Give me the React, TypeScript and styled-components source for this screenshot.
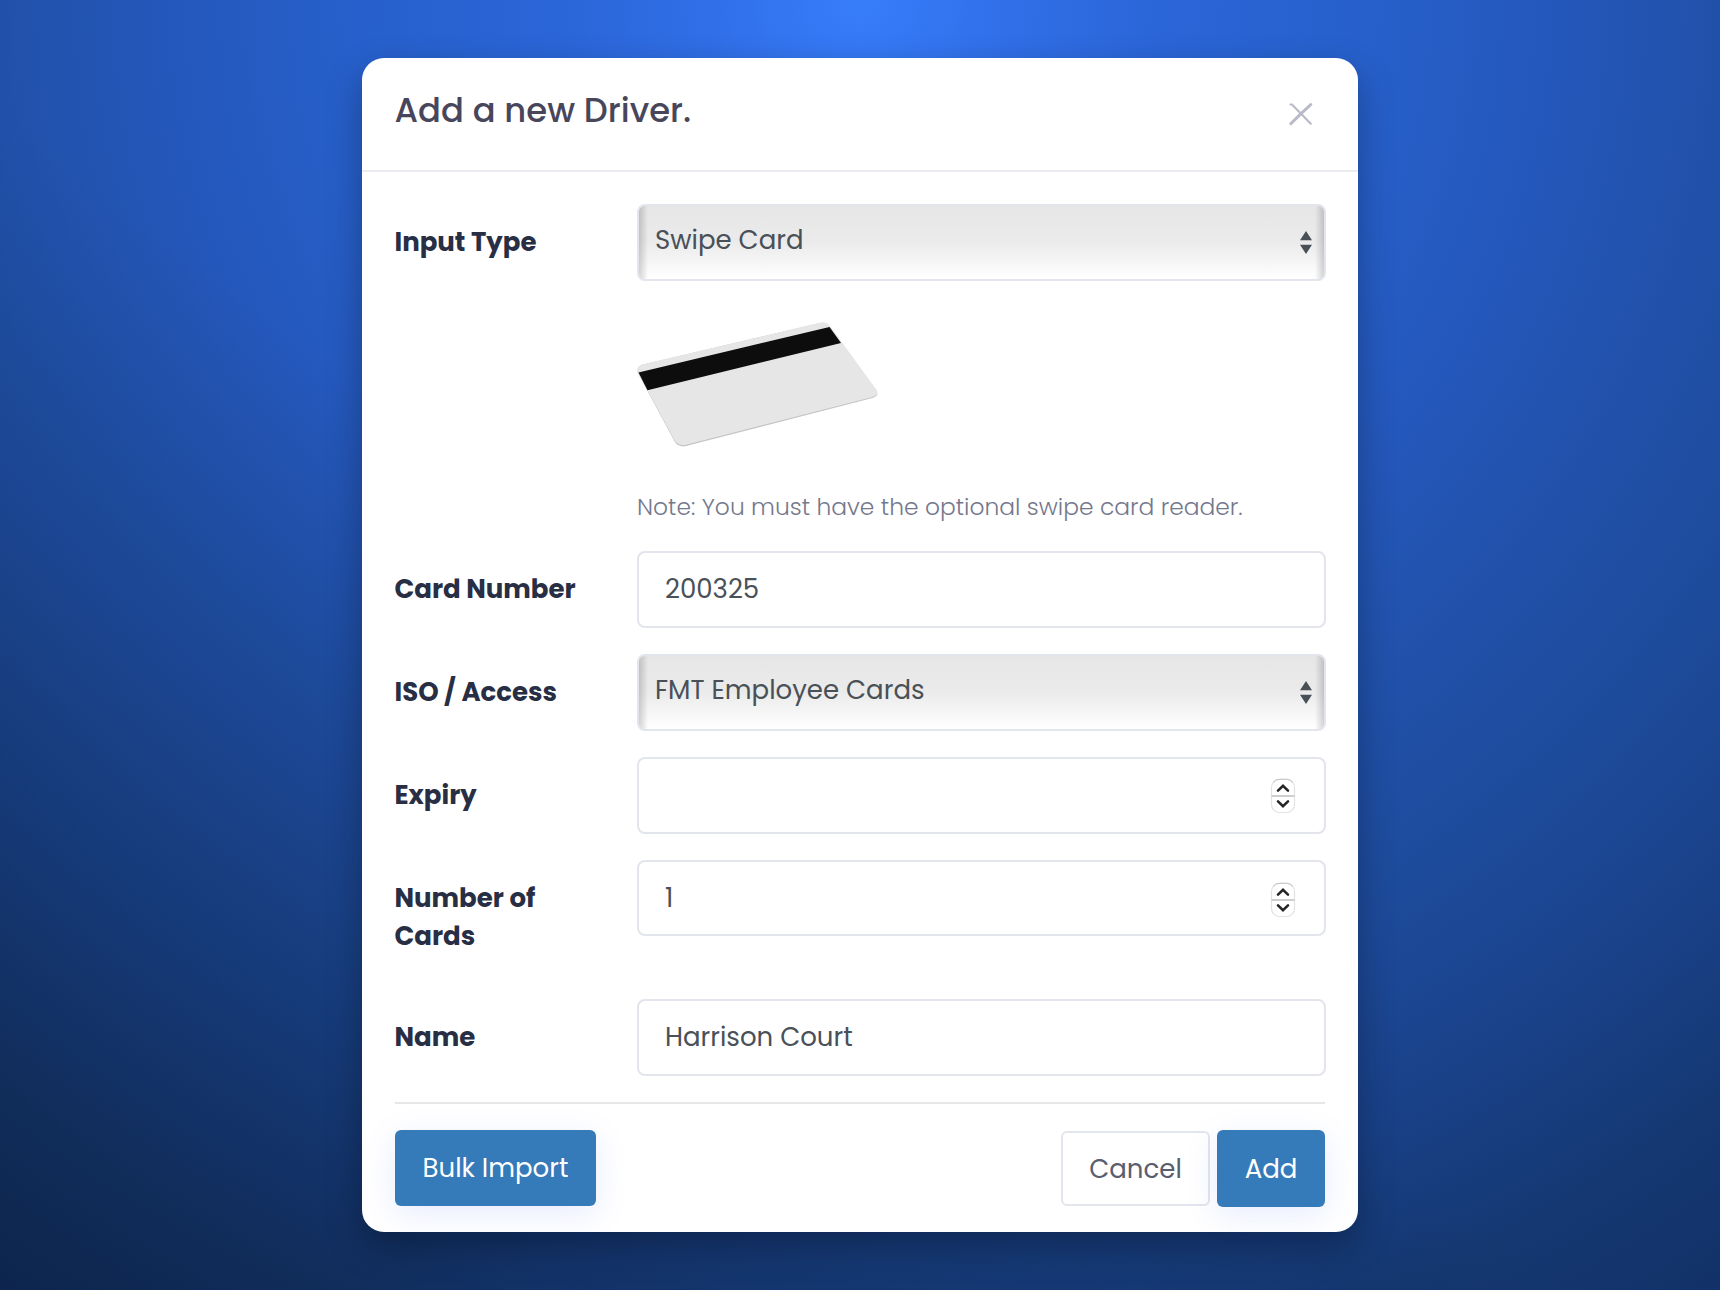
import * as React from 'react';
import styled, { createGlobalStyle } from 'styled-components';

const GlobalStyle = createGlobalStyle`
  * {
    box-sizing: border-box;
  }

  body {
    margin: 0;
    font-family: Poppins, Inter, 'Open Sans', sans-serif;
    font-size: 26px;
  }
`;

const Backdrop = styled.div`
  display: flex;
  flex-direction: column;
  align-items: center;
  width: 100%;
  height: 1290px;
  padding-top: 58px;
  overflow: hidden;
  background:
    linear-gradient(to top right, rgba(4, 16, 30, 0.36), rgba(4, 16, 30, 0) 46%),
    radial-gradient(
      circle 1600px at 50% 0%,
      #387dfb 0,
      #306fe8 150px,
      #2b66d8 300px,
      #2760cc 500px,
      #2457ba 700px,
      #2050a8 880px,
      #1d4a9a 1050px,
      #194188 1232px,
      #153872 1398px,
      #123169 1545px
    );
`;

const ModalFrame = styled.div`
  display: flex;
  flex-direction: column;
  width: 996px;
  height: 1174px;
  background-color: white;
  border-radius: 22px;
  box-shadow: 0 14px 36px rgba(0, 0, 0, 0.3);
`;

const ModalTop = styled.div`
  display: flex;
  align-items: flex-start;
  justify-content: space-between;
  height: 114px;
  padding: 29px 45px 0 32.5px;
  border-bottom: 2px solid #ebecf2;
`;

const ModalTitle = styled.h1`
  margin: 0;
  font-size: 33.8px;
  font-weight: 500;
  line-height: 48px;
  color: #48465b;
`;

const CloseButton = styled.button`
  display: flex;
  margin: 15px 0 0;
  padding: 0;
  border: none;
  background: none;
  cursor: pointer;
`;

const ModalBody = styled.div`
  padding: 32px 32px 0 32.5px;
`;

const FormRow = styled.div<{ $height?: number }>`
  display: flex;
  align-items: flex-start;
  height: ${({ $height }) => $height || 103}px;
`;

const Label = styled.label`
  flex: 0 0 242.5px;
  padding: 19px 60px 0 0;
  font-weight: 700;
  line-height: 38px;
  color: #282e44;
`;

const Control = styled.div<{ $height?: number }>`
  display: flex;
  flex: 1;
  align-items: center;
  justify-content: space-between;
  height: ${({ $height }) => $height || 77}px;
  padding: 0 28px 0 26px;
  border: 2px solid #e2e5ec;
  border-radius: 8px;
  line-height: 38px;
  color: #495057;
`;

const Value = styled.span`
  padding-bottom: 1px;
`;

const SelectControl = styled(Control)`
  padding: 0 12px 0 16px;
  background:
    linear-gradient(to right, rgba(0, 0, 0, 0.17), rgba(0, 0, 0, 0) 9px),
    linear-gradient(to left, rgba(0, 0, 0, 0.17), rgba(0, 0, 0, 0) 9px),
    linear-gradient(#e6e6e6, #ebebeb 50%, #ffffff);

  ${Value} {
    padding-bottom: 5px;
  }
`;

const CardPicture = styled.div`
  height: 209px;
  padding: 40.5px 0 0 242.5px;

  svg {
    display: block;
  }
`;

const Note = styled.p`
  height: 61px;
  margin: 0;
  padding-left: 242.5px;
  font-size: 23.4px;
  font-weight: 300;
  line-height: 34px;
  white-space: nowrap;
  color: #74788d;
`;

const ModalFooter = styled.div`
  display: flex;
  align-items: flex-start;
  margin: 0 33px 0 33px;
  padding-top: 26px;
  border-top: 2px solid #e6e7e9;
`;

const Button = styled.button<{ $width: number; $height: number }>`
  width: ${({ $width }) => $width}px;
  height: ${({ $height }) => $height}px;
  padding: 0;
  border: none;
  border-radius: 6px;
  background-color: #357ab9;
  box-shadow: 0 8px 32px rgba(93, 120, 255, 0.14);
  font-family: inherit;
  font-size: 26px;
  line-height: 38px;
  color: white;
`;

const CancelButton = styled(Button)`
  margin: 1px 7px 0 auto;
  border: 2px solid #e2e5ec;
  background: none;
  box-shadow: none;
  color: #595d6e;
`;

const StepperIcon = styled.svg<{ $drop?: number }>`
  margin-top: ${({ $drop }) => $drop || 0}px;
`;

const SelectArrows = () => (
  <svg width="12" height="23" viewBox="0 0 12 23" fill="#495057">
    <path d="M6 0l6 9.300H0zM6 23l6-9.300H0z" />
  </svg>
);

const Stepper = ({ drop }: { drop?: number }) => (
  <StepperIcon $drop={drop} width="26" height="36" viewBox="0 0 26 36" fill="none">
    <rect x="1.5" y="1.5" width="23" height="33" rx="8" fill="#fff" stroke="#e2e2e2" strokeWidth="1.2" />
    <path d="M3 4.500Q5.500 1.200 9.500 1.200h7q4 0 6.500 3.300" stroke="#c2c2c2" />
    <path d="M1.500 18h23" stroke="#cfcfcf" strokeWidth="2" />
    <path d="M8 12.600l5-4.800 5 4.800M8 23.400l5 4.800 5-4.800" stroke="#262626" strokeWidth="2.600" strokeLinecap="round" />
  </StepperIcon>
);

const SwipeCard = () => (
  <svg width="242" height="127" viewBox="0 0 242 127">
    <path d="M5 42.700L183 1q7-1.500 10 3.500L239.500 68.700q3 5.300-4 7.300L48 124.300q-7 1-10.500-5L.8 51q-1.500-6 4.200-8.300z" fill="#c4c4c4" />
    <path d="M5 42.500L183 .800q7-1.500 10 3.500L239.500 67.700q3 5.300-4 7.300L48 123q-7 1-10.500-5L.8 50.500q-1.500-6 4.200-8z" fill="#e6e6e6" />
    <path d="M1.500 50.500L192.500 5l11.500 16L10.500 68.200z" fill="#0d0d0d" />
  </svg>
);

const App = () => (
  <>
    <GlobalStyle />
    <Backdrop>
      <ModalFrame>
        <ModalTop>
          <ModalTitle>Add a new Driver.</ModalTitle>
          <CloseButton aria-label="Close">
            <svg width="25" height="24" viewBox="0 0 25 24" fill="none" stroke="#b9bac7" strokeLinecap="round">
              <path d="M2.500 2.500h1.500L22.800 21.700" strokeWidth="2.100" />
              <path d="M22.800 2.500L11.500 13.200 2.800 21.700" strokeWidth="3" />
            </svg>
          </CloseButton>
        </ModalTop>
        <ModalBody>
          <FormRow $height={77}>
            <Label>Input Type</Label>
            <SelectControl>
              <Value>Swipe Card</Value>
              <SelectArrows />
            </SelectControl>
          </FormRow>
          <CardPicture>
            <SwipeCard />
          </CardPicture>
          <Note>Note: You must have the optional swipe card reader.</Note>
          <FormRow>
            <Label>Card Number</Label>
            <Control>
              <Value>200325</Value>
            </Control>
          </FormRow>
          <FormRow>
            <Label>ISO / Access</Label>
            <SelectControl>
              <Value>FMT Employee Cards</Value>
              <SelectArrows />
            </SelectControl>
          </FormRow>
          <FormRow>
            <Label>Expiry</Label>
            <Control>
              <Value />
              <Stepper />
            </Control>
          </FormRow>
          <FormRow $height={139}>
            <Label>Number of Cards</Label>
            <Control $height={76}>
              <Value>1</Value>
              <Stepper drop={3} />
            </Control>
          </FormRow>
          <FormRow>
            <Label>Name</Label>
            <Control>
              <Value>Harrison Court</Value>
            </Control>
          </FormRow>
        </ModalBody>
        <ModalFooter>
          <Button $width={201} $height={76}>Bulk Import</Button>
          <CancelButton $width={149} $height={75}>Cancel</CancelButton>
          <Button $width={108} $height={77}>Add</Button>
        </ModalFooter>
      </ModalFrame>
    </Backdrop>
  </>
);

export default App;
